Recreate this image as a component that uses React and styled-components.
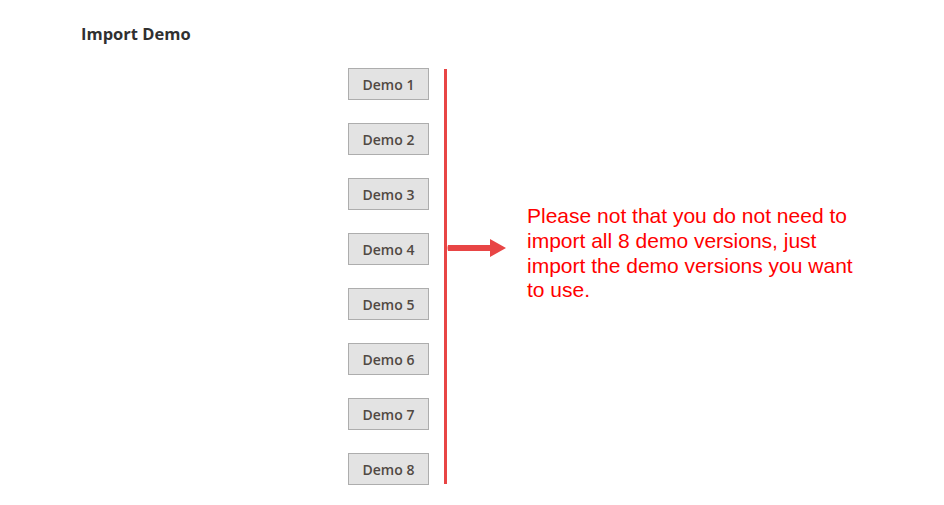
import styled, { createGlobalStyle } from "styled-components";

const GlobalStyle = createGlobalStyle`
  body {
    margin: 0;
    background: #fff;
    font-family: "Open Sans", sans-serif;
  }
`;

const Page = styled.div`
  width: 944px;
  height: 505px;
  padding: 23px 0 0 81px;
  box-sizing: border-box;
`;

const Title = styled.h2`
  margin: 0;
  font-size: 16.5px;
  line-height: 22px;
  font-weight: 700;
  color: #303030;
`;

const Body = styled.div`
  display: flex;
  margin-top: 23px;
  padding-left: 267px;
`;

const DemoList = styled.div`
  display: flex;
  flex-direction: column;
  gap: 23px;
`;

const DemoButton = styled.button`
  width: 81px;
  height: 32px;
  box-sizing: border-box;
  border: 1px solid #adadad;
  background: #e3e3e3;
  color: #514943;
  font-family: "Open Sans", sans-serif;
  font-size: 14px;
  font-weight: 600;
  padding: 1px 0 0;
  cursor: pointer;
`;

const Divider = styled.div`
  width: 3px;
  height: 415px;
  margin: 1px 0 0 15px;
  background: #e84545;
`;

const Note = styled.div`
  display: flex;
  align-items: flex-start;
  padding-top: 136px;
`;

const Arrow = styled.svg`
  display: block;
  margin-top: 34px;
`;

const NoteText = styled.p`
  margin: 0 0 0 21px;
  width: 340px;
  font-family: "Liberation Sans", Arial, sans-serif;
  font-size: 21px;
  line-height: 24.8px;
  color: #ff0000;
`;

const demos = [1, 2, 3, 4, 5, 6, 7, 8];

export default function App() {
  return (
    <>
      <GlobalStyle />
      <Page>
        <Title>Import Demo</Title>
        <Body>
          <DemoList>
            {demos.map((n) => (
              <DemoButton key={n}>Demo {n}</DemoButton>
            ))}
          </DemoList>
          <Divider />
          <Note>
            <Arrow width="59" height="20" viewBox="0 0 59 20">
              <path
                d="M1 7 Q0 10 1 13 H43 V19 L59 10 L43 1 V7 Z"
                fill="#e84545"
              />
            </Arrow>
            <NoteText>
              Please not that you do not need to import all 8 demo versions,
              just import the demo versions you want to use.
            </NoteText>
          </Note>
        </Body>
      </Page>
    </>
  );
}
